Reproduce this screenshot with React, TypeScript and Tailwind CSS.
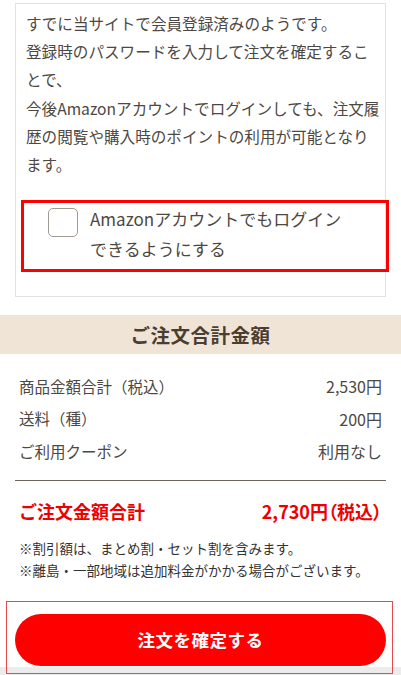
const font = { fontFamily: '"Noto Sans CJK JP", "Noto Sans", sans-serif' }

const rows = [
  { label: '商品金額合計（税込）', value: '2,530円' },
  { label: '送料（種）', value: '200円' },
  { label: 'ご利用クーポン', value: '利用なし' },
]

export default function App() {
  return (
    <div className="relative min-h-[675px] w-[401px] bg-white text-[#4d4843]" style={font}>
      {/* member notice */}
      <div className="ml-[15px] mt-[3px] w-[371px] border border-[#e2e2e2] pb-[24px] pl-[10px] pr-[6px] pt-[5px]">
        <p className="whitespace-nowrap text-[15.6px] leading-[28.2px]">
          すでに当サイトで会員登録済みのようです。
          <br />
          登録時のパスワードを入力して注文を確定するこ
          <br />
          とで、
          <br />
          今後Amazonアカウントでログインしても、注文履
          <br />
          歴の閲覧や購入時のポイントの利用が可能となり
          <br />
          ます。
        </p>
        <div className="-ml-[5px] mt-[22px] w-[368px] border-[3px] border-[#ff0000] pb-[5px] pl-[24px] pt-[1px]">
          <label className="flex items-start gap-[12px]">
            <span className="mt-[4px] h-[29px] w-[30px] shrink-0 rounded-[5px] border-[1.5px] border-[#a09a92] bg-white" />
            <span className="text-[17px] leading-[30px] text-[#4d4843]">
              Amazonアカウントでもログイン
              <br />
              できるようにする
            </span>
          </label>
        </div>
      </div>

      {/* total header */}
      <div className="mt-[18px] flex h-[39px] items-center justify-center bg-[#f0e4d6]">
        <h2 className="text-[19.5px] font-bold tracking-[0.5px] text-[#4a3d32]">ご注文合計金額</h2>
      </div>

      <div className="px-[15px] pt-[16px]">
        {rows.map(r => (
          <div key={r.label} className="flex h-[32.5px] items-center justify-between px-[4px] text-[15.5px] text-[#4d4843]">
            <span>{r.label}</span>
            <span className="text-[16px]">{r.value}</span>
          </div>
        ))}
        <div className="mt-[12px] h-px bg-[#6e655b]" />
        <div className="mt-[17px] flex h-[28px] items-center justify-between px-[4px] text-[18px] font-bold text-[#ee0000]">
          <span>ご注文金額合計</span>
          <span className="[font-feature-settings:'palt']">2,730円（税込）</span>
        </div>
        <div className="mt-[11px] px-[4px] text-[13.5px] leading-[22px] text-[#333333]">
          <p>※割引額は、まとめ割・セット割を含みます。</p>
          <p>※離島・一部地域は追加料金がかかる場合がございます。</p>
        </div>
      </div>

      {/* confirm */}
      <div className="relative z-10 ml-[6px] mt-[20px] w-[387px] border-[1.5px] border-[#e8494b] pb-[7px] pl-[8px] pr-[6px] pt-[12px]">
        <button className="flex h-[52px] w-[371px] items-center justify-center rounded-full bg-[#ff0000] text-[17.5px] font-bold tracking-[0.5px] text-white">
          注文を確定する
        </button>
      </div>
      <div className="fixed bottom-0 left-0 z-0 h-[8px] w-full bg-[#ececec]" />
    </div>
  )
}
